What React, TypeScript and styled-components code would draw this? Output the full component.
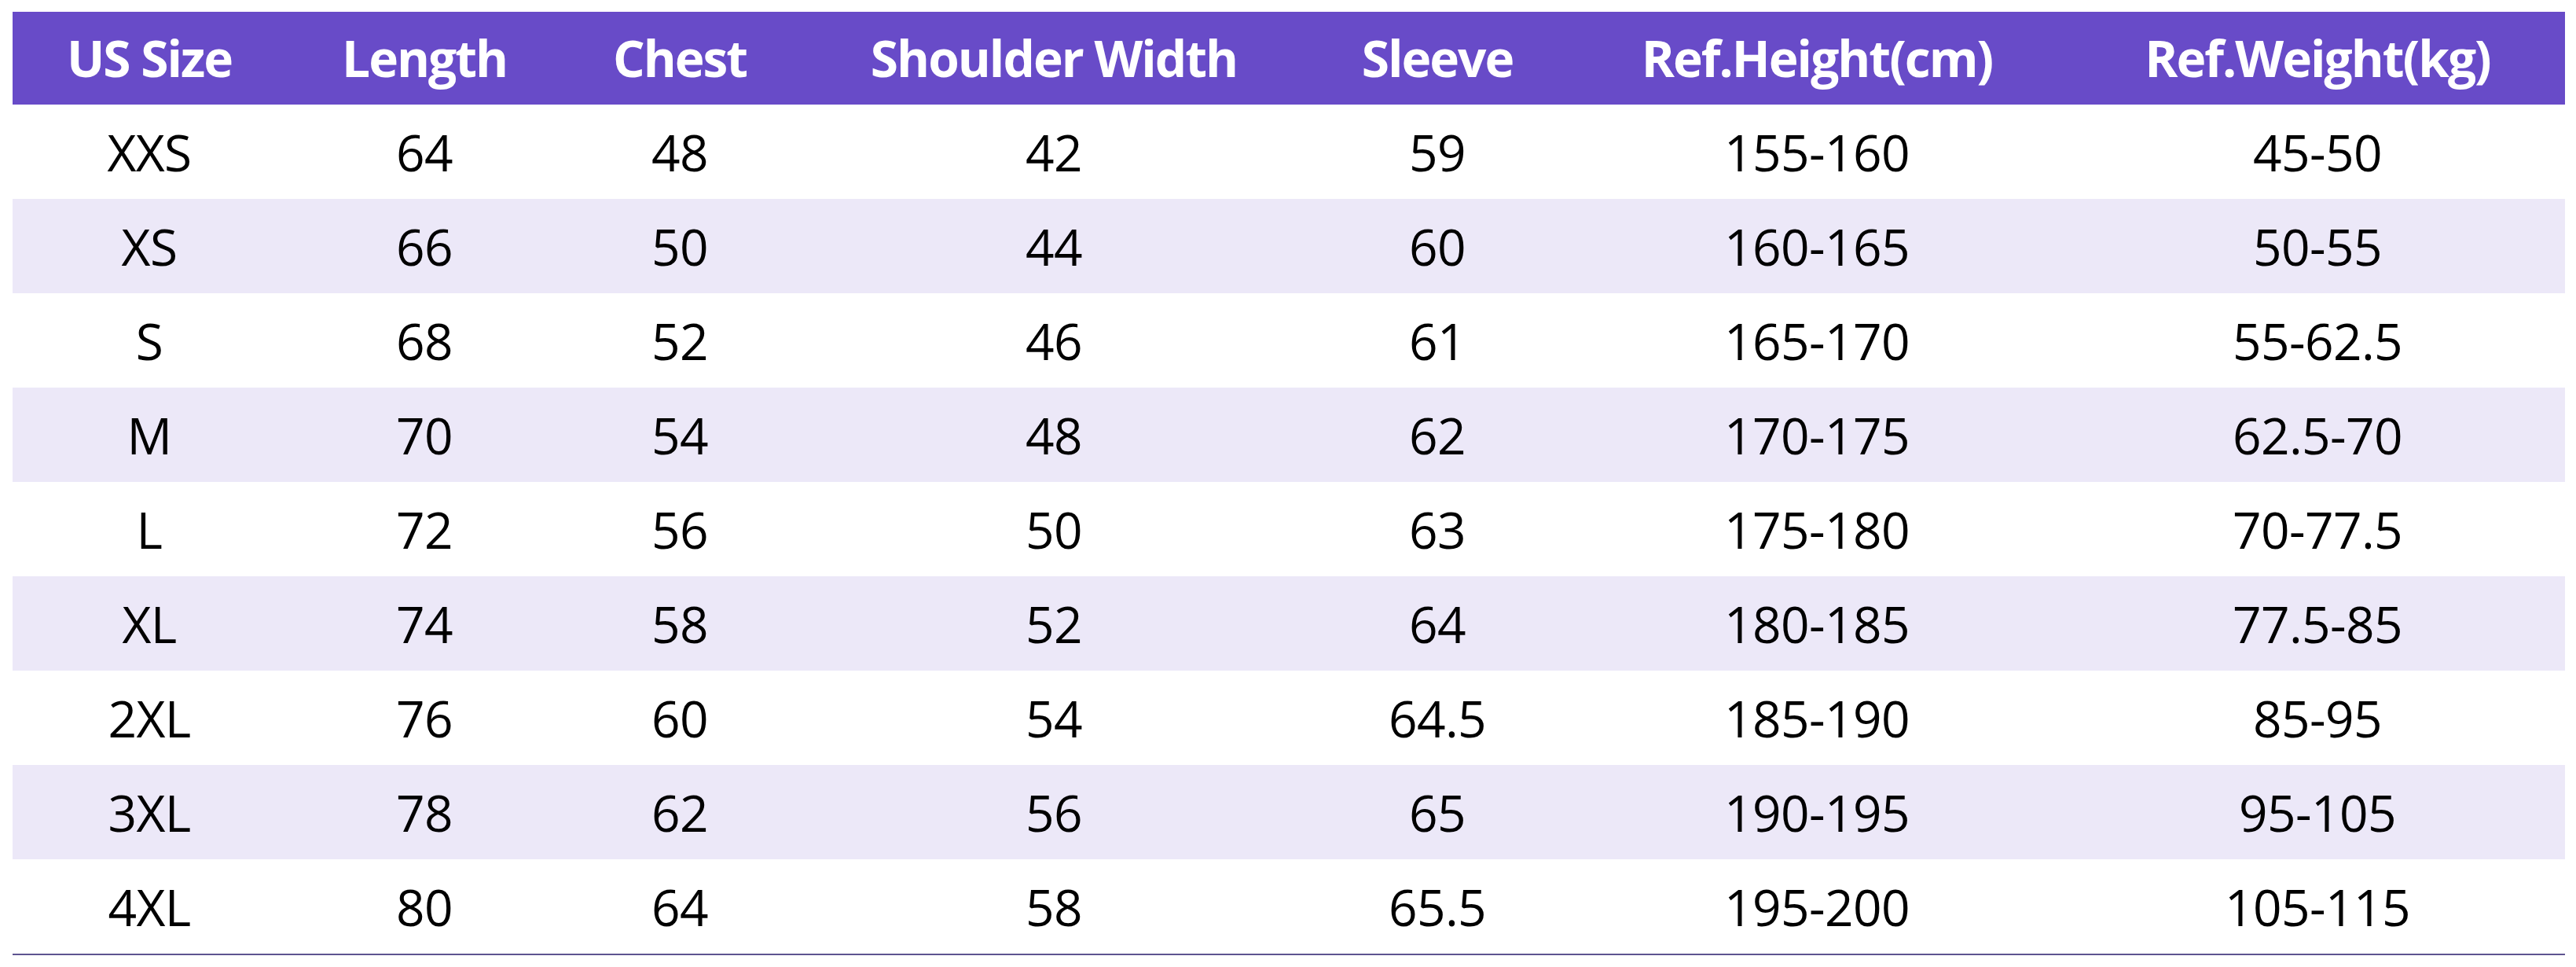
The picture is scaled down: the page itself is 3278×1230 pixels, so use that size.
import React from "react";
import styled, { createGlobalStyle } from "styled-components";

const GlobalStyle = createGlobalStyle`
  html, body {
    margin: 0;
    padding: 0;
    background: #ffffff;
  }
  body {
    font-family: "Open Sans", "Noto Sans", "Liberation Sans", sans-serif;
  }
`;

const Page = styled.div`
  width: 3278px;
  height: 1230px;
  box-sizing: border-box;
  padding: 15px 14px 0 16px;
  background: #ffffff;
`;

const COLS = "348px 352px 298px 654px 322px 644px 630px";

const Table = styled.div`
  display: grid;
  grid-template-columns: ${COLS};
  border-bottom: 2px solid #5e5490;
  width: 3248px;
`;

const HeadCell = styled.div`
  height: 118px;
  background: #684bc8;
  color: #ffffff;
  font-weight: 700;
  font-size: 64px;
  letter-spacing: -2px;
  display: flex;
  align-items: center;
  justify-content: center;
  white-space: nowrap;
  padding-bottom: 2px;
  box-sizing: border-box;
`;

const Cell = styled.div<{ $striped: boolean }>`
  height: 120px;
  background: ${(p) => (p.$striped ? "#ece8f8" : "#ffffff")};
  color: #000000;
  font-weight: 400;
  font-size: 64px;
  letter-spacing: -0.6px;
  display: flex;
  align-items: center;
  justify-content: center;
  white-space: nowrap;
`;

const headers = [
  "US Size",
  "Length",
  "Chest",
  "Shoulder Width",
  "Sleeve",
  "Ref.Height(cm)",
  "Ref.Weight(kg)",
];

const rows: string[][] = [
  ["XXS", "64", "48", "42", "59", "155-160", "45-50"],
  ["XS", "66", "50", "44", "60", "160-165", "50-55"],
  ["S", "68", "52", "46", "61", "165-170", "55-62.5"],
  ["M", "70", "54", "48", "62", "170-175", "62.5-70"],
  ["L", "72", "56", "50", "63", "175-180", "70-77.5"],
  ["XL", "74", "58", "52", "64", "180-185", "77.5-85"],
  ["2XL", "76", "60", "54", "64.5", "185-190", "85-95"],
  ["3XL", "78", "62", "56", "65", "190-195", "95-105"],
  ["4XL", "80", "64", "58", "65.5", "195-200", "105-115"],
];

export default function App() {
  return (
    <>
      <GlobalStyle />
      <Page>
        <Table>
          {headers.map((h) => (
            <HeadCell key={h}>{h}</HeadCell>
          ))}
          {rows.map((r, ri) =>
            r.map((v, ci) => (
              <Cell key={`${ri}-${ci}`} $striped={ri % 2 === 1}>
                {v}
              </Cell>
            ))
          )}
        </Table>
      </Page>
    </>
  );
}
